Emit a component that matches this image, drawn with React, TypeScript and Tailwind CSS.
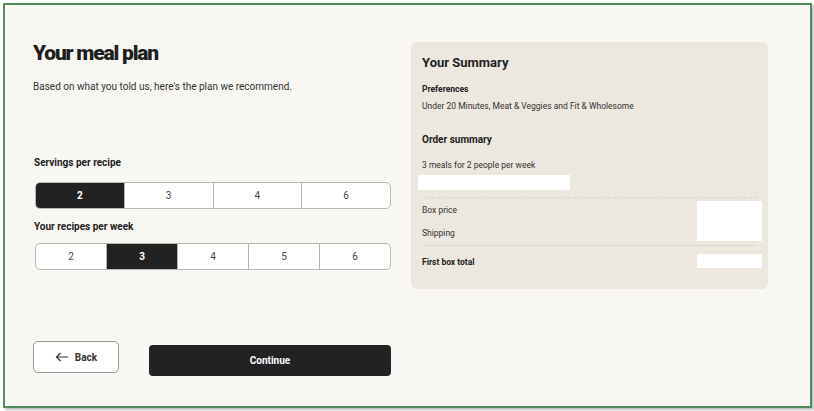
import React from "react";

const font = { fontFamily: "Roboto, 'Liberation Sans', sans-serif" };

function Segmented({ options, selected }: { options: string[]; selected: string }) {
  return (
    <div className="flex h-[27px] w-full rounded-[5px] border border-[#b9b6b0] bg-white overflow-hidden">
      {options.map((o, i) => {
        const active = o === selected;
        return (
          <div
            key={o}
            className={
              "flex flex-1 items-center justify-center text-[10px] " +
              (i > 0 ? "border-l border-[#b9b6b0] " : "") +
              (active ? "bg-[#222222] text-white font-bold" : "text-[#444]")
            }
          >
            {o}
          </div>
        );
      })}
    </div>
  );
}

export default function App() {
  return (
    <div className="w-[814px] h-[411px] bg-white" style={font}>
      <div className="ml-[3px] mt-[3px] w-[809px] h-[405px] border-2 border-[#4f8d5c] bg-[#f8f7f3] shadow-[2px_2px_2px_rgba(0,0,0,0.25)] flex pl-[28px] pt-[35px]">
        <div className="w-[358px] flex flex-col">
          <h1 className="text-[21px] font-black text-[#1e1e1e] tracking-[-1.2px] leading-[26px]">Your meal plan</h1>
          <p className="mt-[14px] text-[10px] text-[#333] leading-[14px]">
            Based on what you told us, here's the plan we recommend.
          </p>
          <div className="mt-[62px] text-[10px] font-bold text-[#222] leading-[14px] pl-[1px]">Servings per recipe</div>
          <div className="mt-[12px] pl-[2px]">
            <Segmented options={["2", "3", "4", "6"]} selected="2" />
          </div>
          <div className="mt-[11px] text-[10px] font-bold text-[#222] leading-[14px] pl-[1px]">Your recipes per week</div>
          <div className="mt-[9px] pl-[2px]">
            <Segmented options={["2", "3", "4", "5", "6"]} selected="3" />
          </div>
          <div className="mt-[71px] flex items-start gap-[30px]">
            <button className="flex h-[32px] w-[86px] items-center justify-center gap-[6px] rounded-[5px] border border-[#9a9792] bg-white text-[10px] font-bold text-[#333]">
              <svg width="14" height="10" viewBox="0 0 14 10" fill="none" stroke="#333" strokeWidth="1.2">
                <path d="M13 5H1.5M5.5 1L1.5 5L5.5 9" />
              </svg>
              Back
            </button>
            <button className="mt-[4px] h-[31px] w-[242px] rounded-[4px] bg-[#222222] text-[10px] font-bold text-white">
              Continue
            </button>
          </div>
        </div>
        <div className="ml-[20px] mt-[2px] w-[357px] h-[247px] rounded-[6px] bg-[#ece8df] px-[11px] pt-[12px] flex flex-col">
          <div className="text-[13px] font-bold text-[#222] leading-[18px]">Your Summary</div>
          <div className="mt-[11px] text-[8.5px] font-bold text-[#222] leading-[12px]">Preferences</div>
          <div className="mt-[5px] text-[8.5px] text-[#333] leading-[12px]">
            Under 20 Minutes, Meat &amp; Veggies and Fit &amp; Wholesome
          </div>
          <div className="mt-[21px] text-[10px] font-bold text-[#222] leading-[14px]">Order summary</div>
          <div className="mt-[12px] text-[8.5px] text-[#333] leading-[12px]">3 meals for 2 people per week</div>
          <div className="mt-[4px] -ml-[4px] h-[15px] w-[152px] bg-white" />
          <div className="mt-[7px] border-t border-dashed border-[#d8d4cb]" />
          <div className="flex mr-[-5px]">
            <div className="flex-1 flex flex-col">
              <div className="mt-[6px] text-[8.5px] text-[#333] leading-[12px]">Box price</div>
              <div className="mt-[11px] text-[8.5px] text-[#333] leading-[12px]">Shipping</div>
            </div>
            <div className="mt-[3px] h-[40px] w-[65px] bg-white" />
          </div>
          <div className="mt-[4px] border-t border-[#dcd8d0]" />
          <div className="flex items-center mr-[-5px] mt-[8px]">
            <div className="flex-1 text-[8.5px] font-bold text-[#222] leading-[12px] pt-[2px]">First box total</div>
            <div className="h-[14px] w-[65px] bg-white" />
          </div>
        </div>
      </div>
    </div>
  );
}
